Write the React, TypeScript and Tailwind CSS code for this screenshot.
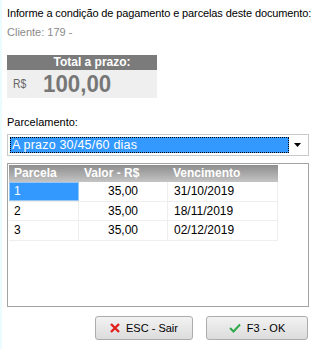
import React from "react";

const rows = [
  { n: "1", v: "35,00", d: "31/10/2019" },
  { n: "2", v: "35,00", d: "18/11/2019" },
  { n: "3", v: "35,00", d: "02/12/2019" },
];

export default function App() {
  return (
    <div className="w-[316px] h-[349px] bg-white border-l-2 border-[#eafcfd] text-black overflow-hidden font-['Liberation_Sans',sans-serif]">
      <div className="pl-[5px] pr-[7px] pt-[6px] text-[11.5px] leading-[14px]">
        <p className="whitespace-nowrap text-[11px] tracking-[-0.12px]">
          Informe a condição de pagamento e parcelas deste documento:
        </p>
        <p className="mt-[5px] text-[11px] text-[#8a8a8a]">Cliente: 179 -</p>

        {/* Total box */}
        <div className="mt-[16px] w-[150px] bg-[#efefef]">
          <div className="h-[15px] bg-[#7b7b7b] text-white font-bold text-[12px] leading-[15px] text-center pl-[20px]">
            Total a prazo:
          </div>
          <div className="h-[28px] flex items-center">
            <span className="ml-[6px] text-[13px] text-[#666] scale-x-[0.8] origin-left">R$</span>
            <span className="ml-[13px] text-[23px] leading-[28px] font-bold text-[#777] scale-x-[0.97] origin-left">
              100,00
            </span>
          </div>
        </div>

        <p className="mt-[17px] text-[11px]">Parcelamento:</p>

        {/* Combo */}
        <div className="mt-[5px] h-[22px] border border-[#c9c9c9] flex items-center p-[2px]">
          <div className="flex-1 h-full bg-[#3399ff] border border-dotted border-black text-white text-[12.5px] leading-[15px] pl-[1px] tracking-[0.2px]">
            A prazo 30/45/60 dias
          </div>
          <div className="w-[17px] flex justify-center">
            <svg width="7" height="4" viewBox="0 0 7 4">
              <path d="M0 0h7L3.5 4z" fill="#000" />
            </svg>
          </div>
        </div>

        {/* Grid */}
        <div className="mt-[7px] h-[144px] border border-[#a3a3a3]">
          <div className="w-[270px] p-px pr-0">
            <div className="flex h-[17px] bg-gradient-to-b from-[#8e8e8e] to-[#c4c4c4] text-white font-bold text-[12px] leading-[17px]">
              <div className="w-[70px] pl-[5px]">Parcela</div>
              <div className="w-[89px] pl-[5px]">Valor - R$</div>
              <div className="flex-1 pl-[5px]">Vencimento</div>
            </div>
            {rows.map((r, i) => (
              <div key={r.n} className="flex h-[19.5px] text-[12px] leading-[19px] border-b border-[#eeeeee]">
                <div
                  className={
                    i === 0
                      ? "w-[70px] pl-[4px] bg-[#3399ff] text-white border border-[#9ac7f0] leading-[17px]"
                      : "w-[70px] pl-[5px] border-r border-[#eeeeee]"
                  }
                >
                  {r.n}
                </div>
                <div className="w-[89px] text-center border-r border-[#eeeeee]">{r.v}</div>
                <div className="flex-1 pl-[6px] border-r border-[#eeeeee]">{r.d}</div>
              </div>
            ))}
          </div>
        </div>

        {/* Buttons */}
        <div className="mt-[9px] flex justify-end gap-[13px] pr-[1px]">
          <button className="w-[98px] h-[24px] rounded-[3px] border border-[#acacac] bg-gradient-to-b from-[#f2f2f2] to-[#dcdcdc] flex items-center justify-center gap-[6px] text-[11px]">
            <svg width="10" height="10" viewBox="0 0 10 10">
              <path d="M1 1L9 9M9 1L1 9" stroke="#e0201b" strokeWidth="2.4" />
            </svg>
            ESC - Sair
          </button>
          <button className="w-[102px] h-[24px] rounded-[3px] border border-[#acacac] bg-gradient-to-b from-[#f2f2f2] to-[#dcdcdc] flex items-center justify-center gap-[6px] text-[11px]">
            <svg width="12" height="10" viewBox="0 0 12 10">
              <path d="M1 5L4.5 8.5L11 1.5" stroke="#2ea84a" strokeWidth="2" fill="none" />
            </svg>
            F3 - OK
          </button>
        </div>
      </div>
    </div>
  );
}
